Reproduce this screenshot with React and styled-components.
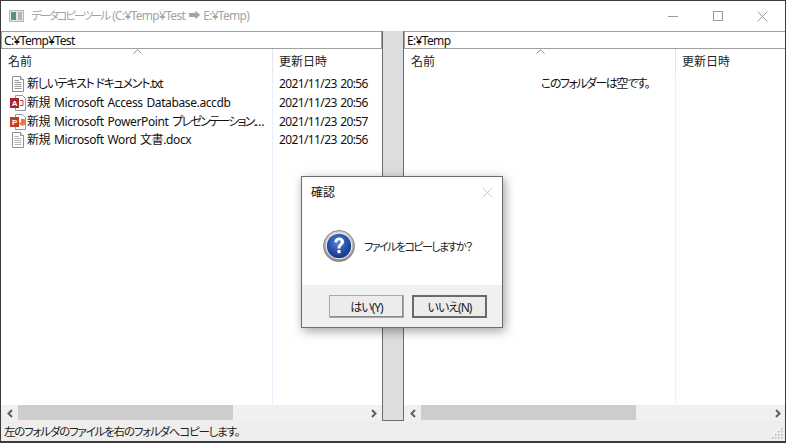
import React from "react";
import styled, { createGlobalStyle } from "styled-components";

const Global = createGlobalStyle`
  html, body { margin: 0; padding: 0; background: #fff; }
  * { box-sizing: border-box; }
  body { font-family: "Noto Sans", "Noto Sans CJK JP", sans-serif; font-size: 12px; color: #000; overflow: hidden; font-feature-settings: "palt"; letter-spacing: -0.38px; word-spacing: 1px; }
`;

const Win = styled.div`
  position: relative; width: 786px; height: 443px; display: flex; flex-direction: column;
  border: 1px solid #3c3c3c; border-bottom-width: 2px; background: #fff; overflow: hidden;
`;
const TitleBar = styled.div`
  height: 30px; flex: none; display: flex; align-items: center; padding-left: 7px; color: #a3a3a3;
`;
const TitleText = styled.span`
  margin-left: 7px; flex: 1; white-space: nowrap; line-height: 30px; letter-spacing: -0.7px; word-spacing: 1px;
`;
const TitleKana = styled.span`
  font-size: 11.5px; letter-spacing: -2.2px;
`;
const WinButton = styled.div`
  width: 45px; height: 30px; display: flex; align-items: center; justify-content: center;
`;
const Main = styled.div`
  flex: 1; display: flex; min-height: 0;
`;
const Pane = styled.div`
  width: ${p => p.$w}px; flex: none; display: flex; flex-direction: column; min-width: 0;
`;
const PathBox = styled.div`
  height: 18px; flex: none; border: 1px solid #a0a0a0; line-height: 17px; padding-left: 2px; white-space: nowrap; color: #111; letter-spacing: -0.65px;
`;
const List = styled.div`
  position: relative; flex: 1; display: flex; min-height: 0; overflow: hidden;
`;
const Column = styled.div`
  width: ${p => p.$w ? p.$w + "px" : "auto"}; flex: ${p => p.$w ? "none" : "1"}; display: flex; flex-direction: column; min-width: 0;
`;
const HeaderCell = styled.div`
  position: relative; height: 24px; flex: none; padding-left: ${p => p.$pl}px; line-height: 25px; letter-spacing: 0; font-feature-settings: normal;
  border-right: ${p => p.$sep ? "1px solid #e5e5e5" : "none"}; color: #222;
`;
const Caret = styled.svg`
  position: absolute; left: 50%; top: 0; margin-left: -4px; width: 9px; height: 5px;
`;
const ColumnBody = styled.div`
  flex: 1; padding-top: 2px; border-right: ${p => p.$sep ? "1px solid #e6f0fa" : "none"}; min-width: 0;
  margin-bottom: 1px;
`;
const Row = styled.div`
  height: 18.67px; display: flex; align-items: center; padding-left: ${p => p.$pl}px; gap: 1px; line-height: 18px; white-space: nowrap; color: #111;
  letter-spacing: ${p => p.$ls || "inherit"};
`;
const FileName = styled.span`
  overflow: hidden; text-overflow: ellipsis; white-space: nowrap; width: 238px;
`;
const Kana = styled.span`
  letter-spacing: ${p => p.$tight ? "-1.75px" : "-1.25px"}; word-spacing: 0;
`;
const EmptyNote = styled.div`
  position: absolute; left: 0; right: 0; top: 26px; text-align: center; line-height: 18px; color: #111;
  letter-spacing: -1.5px;
`;
const HScroll = styled.div`
  height: 16px; flex: none; display: flex; align-items: center; background: #f0f0f0;
`;
const ScrollArrow = styled.div`
  width: 17px; height: 16px; flex: none; display: flex; align-items: center; justify-content: center;
`;
const Track = styled.div`
  flex: 1; height: 16px;
`;
const Thumb = styled.div`
  width: 215px; height: 15px; background: #cdcdcd;
`;
const Splitter = styled.div`
  width: 22px; flex: none; background: #dddddd; border: 1px solid #6d6d6d; border-top: none;
`;
const StatusBar = styled.div`
  position: relative; height: 20px; flex: none; background: #f0eded; padding-left: 3px; line-height: 21px; color: #222;
  font-size: 11.5px; letter-spacing: -1.2px;
`;
const Grip = styled.svg`
  position: absolute; right: 1px; bottom: 1px; width: 13px; height: 13px;
`;
const Dialog = styled.div`
  position: absolute; left: 300px; top: 175px; width: 202px; height: 152px; background: #fff;
  border: 1px solid #6b6b6b; box-shadow: 2px 3px 10px rgba(0,0,0,.38); display: flex; flex-direction: column;
`;
const DialogTitle = styled.div`
  height: 30px; flex: none; display: flex; align-items: center; justify-content: space-between; padding: 0 9px 0 9px; color: #111;
  letter-spacing: 0;
`;
const DialogBody = styled.div`
  flex: 1; display: flex; align-items: center; padding: 0 0 0 21px; gap: 9px; color: #222; white-space: nowrap;
  font-size: 11px; letter-spacing: -1.55px; font-feature-settings: "palt";
`;
const DialogFooter = styled.div`
  height: 42px; flex: none; background: #f0f0f0; display: flex; justify-content: flex-end; gap: 8px; padding: 10px 15px 0 0;
`;
const DialogButton = styled.div`
  width: 75px; height: 23px; background: #ececec; display: flex; align-items: center; justify-content: center;
  border: ${p => p.$def ? "2px solid #6a6a6a" : "1px solid #a8a8a8"}; color: #222; letter-spacing: -1px;
  ${p => !p.$def && "box-shadow: inset -1px -1px 0 #8a8a8a;"}
`;

const DocIcon = ({ lined }) => (
  <svg width="16" height="16" viewBox="0 0 16 16" style={{ flex: "none" }}>
    <path d="M2.5 .5H10.5L13.5 3.5V15.5H2.5Z" fill="#fff" stroke="#8f8f8f" />
    <path d="M10.5 .5V3.5H13.5" fill="#eee" stroke="#8f8f8f" />
    <path d="M4.5 4.5H9M4.5 6.5H11.5M4.5 8.5H11.5M4.5 10.5H11.5M4.5 12.5H11.5" stroke={lined ? "#9a9a9a" : "#b5b5b5"} />
  </svg>
);
const AccessIcon = () => (
  <svg width="16" height="16" viewBox="0 0 16 16" style={{ flex: "none" }}>
    <path d="M5.5 .5H12.5L15.5 3.5V15.5H5.5Z" fill="#fff" stroke="#999" />
    <path d="M10 5.5H13V10.5H10" fill="none" stroke="#b8434f" />
    <rect x="0" y="3" width="9" height="10" fill="#a4262c" />
    <text x="4.5" y="11" textAnchor="middle" fontSize="8" fontWeight="700" fill="#fff" fontFamily="Liberation Sans">A</text>
  </svg>
);
const PptIcon = () => (
  <svg width="16" height="16" viewBox="0 0 16 16" style={{ flex: "none" }}>
    <path d="M5.5 .5H12.5L15.5 3.5V15.5H5.5Z" fill="#fff" stroke="#999" />
    <path d="M11 5A3.5 3.5 0 1 1 9 8.5H11Z" fill="#e8764f" />
    <rect x="0" y="3" width="9" height="10" fill="#c43e1c" />
    <text x="4.5" y="11" textAnchor="middle" fontSize="8" fontWeight="700" fill="#fff" fontFamily="Liberation Sans">P</text>
  </svg>
);
const AppIcon = () => (
  <svg width="16" height="14" viewBox="0 0 16 14" style={{ flex: "none" }}>
    <rect x="1.5" y="1.5" width="14" height="11" fill="#e4e8e8" stroke="#b4b8b8" />
    <rect x="3" y="3" width="5" height="8" fill="#5d8d80" />
    <rect x="10" y="3" width="4" height="8" fill="#a9b7cb" />
  </svg>
);
const QuestionIcon = () => (
  <svg width="32" height="32" viewBox="0 0 32 32" style={{ flex: "none" }}>
    <defs>
      <radialGradient id="qb" cx="45%" cy="35%" r="75%">
        <stop offset="0" stopColor="#5a86d8" />
        <stop offset=".55" stopColor="#234ea6" />
        <stop offset="1" stopColor="#16307a" />
      </radialGradient>
      <linearGradient id="qr" x1="0" y1="0" x2="0" y2="1">
        <stop offset="0" stopColor="#d2d2d2" />
        <stop offset="1" stopColor="#8c8c8c" />
      </linearGradient>
    </defs>
    <circle cx="16" cy="16" r="15.5" fill="url(#qr)" stroke="#777" strokeWidth=".8" />
    <circle cx="16" cy="16" r="13.2" fill="#f2f2f2" />
    <circle cx="16" cy="16" r="12.2" fill="url(#qb)" />
    <path d="M11.3 12.2C11.6 9.2 13.7 7.6 16.3 7.6C19.1 7.6 21 9.3 21 11.7C21 15 17.4 15.2 17.4 18.4H14.6C14.5 14.2 17.7 14 17.7 11.9C17.7 10.8 17.1 10.2 16.1 10.2C15 10.2 14.4 11 14.3 12.4Z" fill="#fff" />
    <rect x="14.4" y="20" width="3.2" height="3.2" rx=".6" fill="#fff" />
  </svg>
);
const Chevron = ({ dir }) => (
  <svg width="8" height="9" viewBox="0 0 8 9">
    <path d={dir === "l" ? "M6 1L2.5 4.5L6 8" : "M2 1L5.5 4.5L2 8"} fill="none" stroke="#606060" strokeWidth="2" />
  </svg>
);
const SortCaret = () => (
  <Caret viewBox="0 0 9 5"><path d="M.5 4.5L4.5 .8L8.5 4.5" fill="none" stroke="#8a8a8a" /></Caret>
);
const CloseGlyph = ({ color, size }) => (
  <svg width={size} height={size} viewBox={`0 0 ${size} ${size}`}>
    <path d={`M.5 .5L${size - .5} ${size - .5}M${size - .5} .5L.5 ${size - .5}`} stroke={color} fill="none" />
  </svg>
);

const files = [
  { Icon: () => <DocIcon lined />, name: <Kana>新しいテキスト ドキュメント.txt</Kana>, date: "2021/11/23 20:56", id: 1 },
  { Icon: AccessIcon, name: "新規 Microsoft Access Database.accdb", date: "2021/11/23 20:56", id: 2 },
  { Icon: PptIcon, name: <>新規 Microsoft PowerPoint <Kana $tight>プレゼンテーション.pptx</Kana></>, date: "2021/11/23 20:57", id: 3 },
  { Icon: DocIcon, name: "新規 Microsoft Word 文書.docx", date: "2021/11/23 20:56", id: 4 },
];

const ScrollBar = () => (
  <HScroll>
    <ScrollArrow><Chevron dir="l" /></ScrollArrow>
    <Track><Thumb /></Track>
    <ScrollArrow><Chevron dir="r" /></ScrollArrow>
  </HScroll>
);

export default function App() {
  return (
    <Win>
      <Global />
      <TitleBar>
        <AppIcon />
        <TitleText><TitleKana>データコピーツール</TitleKana> (C:¥Temp¥Test ➡ E:¥Temp)</TitleText>
        <WinButton>
          <svg width="10" height="1"><rect width="10" height="1" fill="#9a9a9a" /></svg>
        </WinButton>
        <WinButton>
          <svg width="10" height="10"><rect x=".5" y=".5" width="9" height="9" fill="none" stroke="#9a9a9a" /></svg>
        </WinButton>
        <WinButton><CloseGlyph color="#9a9a9a" size={11} /></WinButton>
      </TitleBar>
      <Main>
        <Pane $w={381}>
          <PathBox>C:¥Temp¥Test</PathBox>
          <List>
            <Column $w={272}>
              <HeaderCell $pl={7} $sep>名前<SortCaret /></HeaderCell>
              <ColumnBody $sep>
                {files.map(f => (
                  <Row key={f.id} $pl={9}><f.Icon /><FileName>{f.name}</FileName></Row>
                ))}
              </ColumnBody>
            </Column>
            <Column>
              <HeaderCell $pl={6}>更新日時</HeaderCell>
              <ColumnBody>
                {files.map(f => <Row key={f.id} $pl={6} $ls="-0.62px">{f.date}</Row>)}
              </ColumnBody>
            </Column>
          </List>
          <ScrollBar />
        </Pane>
        <Splitter />
        <Pane $w={382}>
          <PathBox>E:¥Temp</PathBox>
          <List>
            <Column $w={272}>
              <HeaderCell $pl={7} $sep>名前<SortCaret /></HeaderCell>
              <ColumnBody $sep />
            </Column>
            <Column>
              <HeaderCell $pl={6}>更新日時</HeaderCell>
              <ColumnBody />
            </Column>
            <EmptyNote>このフォルダーは空です。</EmptyNote>
          </List>
          <ScrollBar />
        </Pane>
      </Main>
      <StatusBar>
        左のフォルダのファイルを右のフォルダへコピーします。
        <Grip viewBox="0 0 13 13">
          {[[10,1],[10,4],[7,4],[10,7],[7,7],[4,7],[10,10],[7,10],[4,10],[1,10]].map(([x,y]) => (
            <rect key={x + "-" + y} x={x} y={y} width="1.5" height="1.5" fill="#b4b4c0" />
          ))}
        </Grip>
      </StatusBar>
      <Dialog>
        <DialogTitle>確認<CloseGlyph color="#c8c8c8" size={11} /></DialogTitle>
        <DialogBody><QuestionIcon />ファイルをコピーしますか？</DialogBody>
        <DialogFooter>
          <DialogButton>はい(Y)</DialogButton>
          <DialogButton $def>いいえ(N)</DialogButton>
        </DialogFooter>
      </Dialog>
    </Win>
  );
}
